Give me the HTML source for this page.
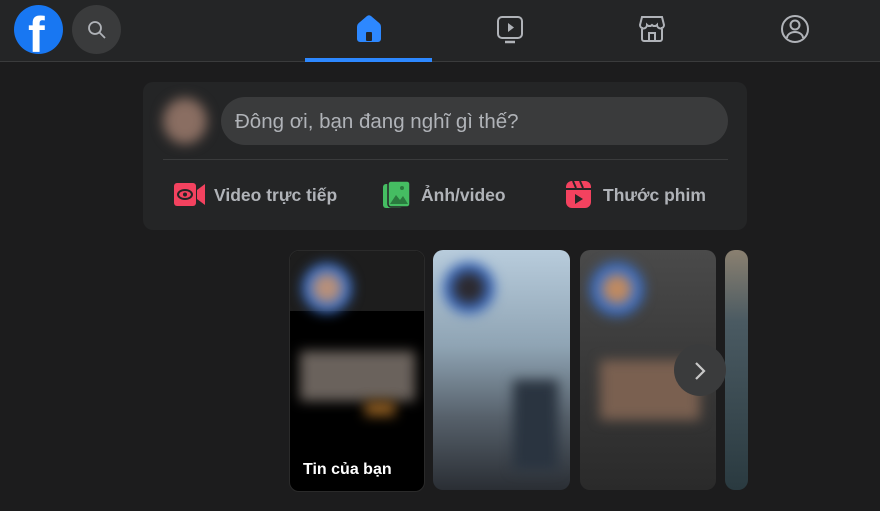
<!DOCTYPE html><html><head><meta charset="utf-8"><style>
body{margin:0;width:880px;height:511px;background:#1c1c1d;font-family:"Liberation Sans","Noto Sans CJK SC",sans-serif;overflow:hidden;position:relative}
.hdr{position:absolute;left:0;top:0;width:880px;height:61px;background:#242526;border-bottom:1px solid #3a3b3c}
.abs{position:absolute}
.card{left:143px;top:82px;width:604px;height:148px;background:#242526;border-radius:10px}
.st{position:absolute;top:250px;height:240px;border-radius:10px;overflow:hidden}
.bl{position:absolute;filter:blur(6px)}
</style></head><body>
<div class="hdr">
 <div class="abs" style="left:14px;top:5px;width:49px;height:49px;border-radius:50%;background:#1877f2;overflow:hidden"><div class="abs" style="left:14px;top:5px;font:bold 50px 'Liberation Sans',sans-serif;color:#fff;line-height:50px">f</div></div>
 <div class="abs" style="left:72px;top:5px;width:49px;height:49px;border-radius:50%;background:#3a3b3c"></div>
 <svg class="abs" style="left:85px;top:18px" width="24" height="24"><circle cx="10" cy="10" r="6" fill="none" stroke="#b0b3b8" stroke-width="1.8"/><path d="M14.5 14.5 L20 20" stroke="#b0b3b8" stroke-width="1.8"/></svg>
 <svg class="abs" style="left:354px;top:14px" width="30" height="30"><path d="M3 13 Q3 10 6 8 L13 2 Q15 0.5 17 2 L24 8 Q27 10 27 13 V25 a3 3 0 0 1 -3 3 H6 a3 3 0 0 1 -3 -3Z" fill="#2d88ff"/><rect x="12" y="18" width="6" height="9" rx="1" fill="#242526"/></svg>
 <div class="abs" style="left:305px;top:58px;width:127px;height:4px;background:#2d88ff"></div>
 <svg class="abs" style="left:496px;top:15px" width="30" height="30"><rect x="2" y="2" width="24" height="21" rx="4" fill="none" stroke="#b0b3b8" stroke-width="2"/><path d="M12 8 L18 12.5 L12 17Z" fill="#b0b3b8"/><path d="M9 27 H19" stroke="#b0b3b8" stroke-width="2.5"/></svg>
 <svg class="abs" style="left:638px;top:14px" width="30" height="30"><path d="M4 3 H24 L26 11 a3.5 3.5 0 0 1 -7 0 a3.5 3.5 0 0 1 -5 0 a3.5 3.5 0 0 1 -5 0 a3.5 3.5 0 0 1 -7 0Z M4 13 V25 a2 2 0 0 0 2 2 H22 a2 2 0 0 0 2 -2 V13 M11 27 V19 H17 V27" fill="none" stroke="#b0b3b8" stroke-width="2"/></svg>
 <svg class="abs" style="left:780px;top:14px" width="30" height="30"><circle cx="15" cy="15" r="13" fill="none" stroke="#b0b3b8" stroke-width="2"/><circle cx="15" cy="11" r="4.5" fill="none" stroke="#b0b3b8" stroke-width="2"/><path d="M7 24 a8 6 0 0 1 16 0" fill="none" stroke="#b0b3b8" stroke-width="2"/></svg>
</div>
<div class="abs card">
 <div class="bl" style="left:20px;top:16px;width:44px;height:46px;border-radius:50%;background:#8a6e62"></div>
 <div class="abs" style="left:78px;top:15px;width:507px;height:48px;border-radius:24px;background:#3a3b3c"></div>
 <div class="abs" style="left:92px;top:28px;font-size:20.5px;color:#b0b3b8">Đông ơi, bạn đang nghĩ gì thế?</div>
 <div class="abs" style="left:20px;top:77px;width:565px;height:1px;background:#3a3b3c"></div>
 <svg class="abs" style="left:31px;top:100px" width="32" height="26"><rect x="0" y="1" width="22" height="23" rx="3" fill="#f3425f"/><path d="M23 8 L31 2 V23 L23 17Z" fill="#f3425f"/><ellipse cx="11" cy="12.5" rx="7" ry="4.5" fill="none" stroke="#242526" stroke-width="2"/><circle cx="11" cy="12.5" r="2" fill="#242526"/></svg>
 <div class="abs" style="left:71px;top:103px;font-size:17.5px;color:#b0b3b8;font-weight:bold">Video trực tiếp</div>
 <svg class="abs" style="left:239px;top:98px" width="30" height="30"><rect x="1" y="4" width="20" height="24" rx="3" fill="#45bd62"/><rect x="6" y="1" width="22" height="26" rx="3" fill="#45bd62" stroke="#242526" stroke-width="1.5"/><path d="M8 24 L14 15 L18 20 L21 16 L26 24Z" fill="#2a7a3e"/><circle cx="20" cy="8" r="2" fill="#2a7a3e"/></svg>
 <div class="abs" style="left:278px;top:103px;font-size:17.5px;color:#b0b3b8;font-weight:bold">Ảnh/video</div>
 <svg class="abs" style="left:422px;top:98px" width="28" height="30"><rect x="1" y="1" width="25" height="27" rx="6" fill="#f3425f"/><rect x="1" y="8" width="25" height="2" fill="#242526"/><path d="M8 1 L11 8 M15 1 L18 8" stroke="#242526" stroke-width="2"/><path d="M10 14 L18 19 L10 24Z" fill="#242526"/></svg>
 <div class="abs" style="left:460px;top:103px;font-size:17.5px;color:#b0b3b8;font-weight:bold">Thước phim</div>
</div>
<div class="st" style="left:289px;width:134px;background:#000;border:1px solid #2a2a2a">
 <div class="abs" style="left:0;top:0;width:134px;height:60px;background:#1d1d1d"></div>
 <div class="bl" style="left:12px;top:12px;width:50px;height:50px;border-radius:50%;background:#3d6ec0"></div>
 <div class="bl" style="left:22px;top:22px;width:30px;height:30px;border-radius:50%;background:#b8907a"></div>
 <div class="bl" style="left:10px;top:100px;width:115px;height:50px;background:#6a625c"></div>
 <div class="bl" style="left:75px;top:150px;width:30px;height:15px;background:#8a5a20"></div>
 <div class="abs" style="left:13px;top:210px;font-size:16px;color:#fff;font-weight:bold">Tin của bạn</div>
</div>
<div class="st" style="left:433px;width:137px;background:linear-gradient(#b8ccdc,#8fa4b4 40%,#56606a 70%,#2a2e34)">
 <div class="bl" style="left:10px;top:12px;width:52px;height:52px;border-radius:50%;background:#3e6ab8"></div>
 <div class="bl" style="left:20px;top:22px;width:32px;height:32px;border-radius:50%;background:#2c2a30"></div>
 <div class="bl" style="left:80px;top:130px;width:45px;height:90px;background:#2a3440"></div>
</div>
<div class="st" style="left:580px;width:136px;background:linear-gradient(#4a4a4a,#3c3c3c 40%,#2a2a2a)">
 <div class="bl" style="left:10px;top:12px;width:54px;height:54px;border-radius:50%;background:#3d6ec0"></div>
 <div class="bl" style="left:22px;top:24px;width:30px;height:30px;border-radius:50%;background:#c08a60"></div>
 <div class="bl" style="left:20px;top:110px;width:100px;height:60px;background:#7a6050"></div>
</div>
<div class="st" style="left:725px;width:23px;background:linear-gradient(#8a8070,#4a5a62 30%,#2a3a40)"></div>
<div class="abs" style="left:674px;top:344px;width:52px;height:52px;border-radius:50%;background:#3a3b3c"></div>
<svg class="abs" style="left:690px;top:360px" width="20" height="22"><path d="M6 3 L14 11 L6 19" fill="none" stroke="#c8c8c8" stroke-width="2.2"/></svg>
</body></html>
